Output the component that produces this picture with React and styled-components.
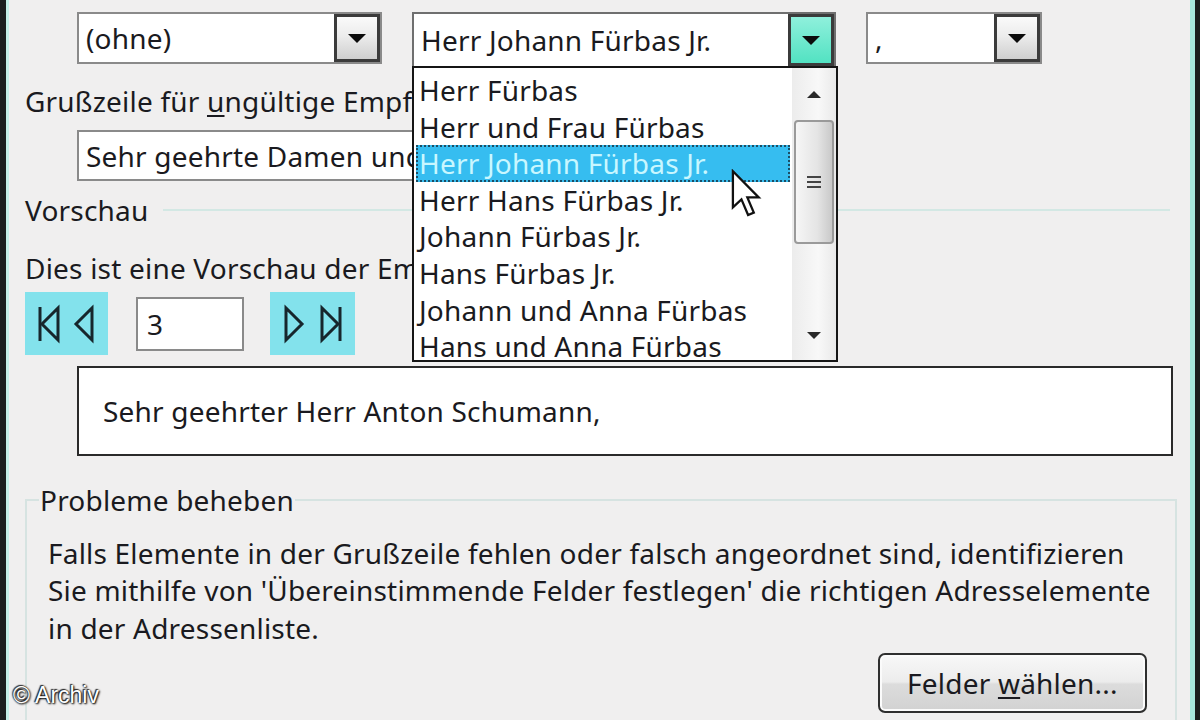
import React from 'react';
import styled, { createGlobalStyle } from 'styled-components';

const Global = createGlobalStyle`
  html, body { margin: 0; padding: 0; background: #efefef; }
  body { font-family: "Noto Sans", "DejaVu Sans", sans-serif; }
  * { box-sizing: border-box; }
`;

const Window = styled.div`
  position: relative;
  width: 1200px;
  height: 720px;
  overflow: hidden;
  background: #f0efef;
  border-left: 6px solid #1b1f1e;
  border-right: 5px solid #1b1f1e;
  box-shadow: inset 3px 0 0 #c4efe7, inset -5px 0 0 #a8e9dd;
  color: #1a1a20;
  font-size: 28px;
  letter-spacing: 0.2px;
  padding-left: 19px;
`;

const ComboRow = styled.div`
  display: flex;
  align-items: flex-start;
  gap: 30px;
  margin: 12px 0 0 52px;
`;

const Combo = styled.div`
  position: relative;
  display: flex;
  align-items: center;
  width: ${p => p.$w}px;
  height: ${p => p.$h || 52}px;
  background: #fff;
  border: 2px solid ${p => (p.$open ? '#6f6f6f' : '#8a8a8a')};
  padding-left: 7px;
`;

const ComboText = styled.span`
  flex: 1;
  white-space: nowrap;
  line-height: 1.3;
`;

const DropButton = styled.div`
  position: relative;
  width: 46px;
  align-self: stretch;
  border: 3px solid #3b3b3b;
  background: ${p =>
    p.$active
      ? 'linear-gradient(#8ff0dc, #52e2c2)'
      : 'linear-gradient(#fafafa 0%, #ececec 45%, #cfcfcf 100%)'};
  display: flex;
  align-items: center;
  justify-content: center;
  &::after {
    content: '';
    border-left: 9px solid transparent;
    border-right: 9px solid transparent;
    border-top: 9px solid #0c0c0c;
  }
`;

const DropList = styled.div`
  position: absolute;
  top: 100%;
  left: -2px;
  width: 426px;
  height: 296px;
  background: #fff;
  border: 2px solid #151515;
  display: flex;
  z-index: 5;
  overflow: hidden;
`;

const Items = styled.div`
  flex: 1;
  padding: 4px 0 0 2px;
`;

const Item = styled.div`
  height: 36.6px;
  line-height: 36.6px;
  padding-left: 3px;
  white-space: nowrap;
  color: ${p => (p.$sel ? '#c9f7ff' : '#1a1a20')};
  background: ${p => (p.$sel ? '#36bdf0' : 'transparent')};
  outline: ${p => (p.$sel ? '2px dotted #1c4d64' : 'none')};
  outline-offset: -2px;
  margin-right: ${p => (p.$sel ? '2px' : '0')};
`;

const ScrollBar = styled.div`
  width: 44px;
  background: linear-gradient(90deg, #ececec, #f8f8f8 60%, #e9e9e9);
  display: flex;
  flex-direction: column;
  align-items: center;
`;

const ScrollArrow = styled.div`
  height: ${p => p.$h}px;
  display: flex;
  align-items: center;
  justify-content: center;
  &::after {
    content: '';
    border-left: 7px solid transparent;
    border-right: 7px solid transparent;
    ${p => (p.$up ? 'border-bottom: 7px solid #2a2a2a;' : 'border-top: 7px solid #2a2a2a;')}
  }
`;

const Thumb = styled.div`
  width: 40px;
  height: 124px;
  border: 2px solid #9a9a9a;
  border-radius: 4px;
  background: linear-gradient(90deg, #f6f6f6, #e4e4e4 60%, #c9c9c9);
  display: flex;
  flex-direction: column;
  align-items: center;
  justify-content: center;
  gap: 3px;
  margin-bottom: auto;
`;

const Grip = styled.span`
  width: 14px;
  height: 2px;
  background: #444;
`;

const Label = styled.div`
  line-height: 36px;
  margin-top: ${p => p.$mt || 0}px;
  white-space: nowrap;
`;

const U = styled.span`
  text-decoration: underline;
  text-underline-offset: 3px;
  text-decoration-thickness: 2px;
`;

const TextField = styled.div`
  width: ${p => p.$w}px;
  height: ${p => p.$h}px;
  margin: ${p => p.$mt || 0}px 0 0 ${p => p.$ml || 0}px;
  background: #fff;
  border: 2px solid ${p => (p.$dark ? '#2a2a2a' : '#8a8a8a')};
  display: flex;
  align-items: center;
  padding-left: ${p => p.$pl || 7}px;
  white-space: nowrap;
  overflow: hidden;
`;

const SectionTitle = styled.div`
  display: flex;
  align-items: center;
  margin-top: 11px;
  line-height: 36px;
  width: 1145px;
  &::after {
    content: '';
    flex: 1;
    height: 2px;
    background: #d3e8e4;
    margin-left: 14px;
  }
`;

const NavRow = styled.div`
  display: flex;
  align-items: center;
  height: 63px;
  margin-top: 6px;
`;

const NavGroup = styled.div`
  display: flex;
  align-items: center;
  justify-content: space-around;
  width: ${p => p.$w}px;
  height: 63px;
  background: #83e2ec;
  margin-left: ${p => p.$ml || 0}px;
  padding: 0 6px;
`;

const Preview = styled(TextField)``;

const Group = styled.fieldset`
  width: 1145px;
  margin: 26px 0 0 0;
  padding: 0 24px 0 12px;
  border: 2px solid #d6e3e1;
  border-bottom: none;
  min-height: 260px;
`;

const Legend = styled.legend`
  padding: 0 1px;
  line-height: 36px;
`;

const Para = styled.p`
  margin: 17px 0 0 9px;
  line-height: 37.3px;
  white-space: nowrap;
`;

const ButtonRow = styled.div`
  display: flex;
  justify-content: flex-end;
  margin: 6px 4px 0 0;
`;

const Button = styled.button`
  width: 269px;
  height: 60px;
  font: inherit;
  letter-spacing: inherit;
  color: #1a1a20;
  border: 2px solid #2f2f2f;
  border-radius: 7px;
  background: linear-gradient(#f8f8f8 0%, #ececec 48%, #dcdcdc 52%, #d2d2d2 100%);
  box-shadow: inset 0 0 0 2px #fbfbfb;
  padding: 0;
`;

const Watermark = styled.div`
  position: absolute;
  left: 7px;
  bottom: 11px;
  font-family: "Liberation Sans", Arial, sans-serif;
  font-size: 23px;
  letter-spacing: 0;
  color: #fff;
  text-shadow: 0 0 2px #000, 1px 1px 2px #000, -1px -1px 1px #333;
`;

const Cursor = styled.svg`
  position: absolute;
  left: 317px;
  top: 155px;
  z-index: 6;
`;

const NavIcon = ({ kind }) => {
  const s = { stroke: '#17262c', strokeWidth: 3, fill: 'none', strokeLinejoin: 'miter' };
  return (
    <svg width="26" height="40" viewBox="0 0 26 40">
      {kind === 'first' && (
        <>
          <line x1="4" y1="3" x2="4" y2="37" {...s} />
          <polygon points="22,4 6,20 22,36" {...s} />
        </>
      )}
      {kind === 'prev' && <polygon points="21,4 5,20 21,36" {...s} />}
      {kind === 'next' && <polygon points="5,4 21,20 5,36" {...s} />}
      {kind === 'last' && (
        <>
          <polygon points="4,4 20,20 4,36" {...s} />
          <line x1="22" y1="3" x2="22" y2="37" {...s} />
        </>
      )}
    </svg>
  );
};

const options = [
  'Herr Fürbas',
  'Herr und Frau Fürbas',
  'Herr Johann Fürbas Jr.',
  'Herr Hans Fürbas Jr.',
  'Johann Fürbas Jr.',
  'Hans Fürbas Jr.',
  'Johann und Anna Fürbas',
  'Hans und Anna Fürbas',
];

export default function App() {
  return (
    <>
      <Global />
      <Window>
        <ComboRow>
          <Combo $w={305}>
            <ComboText>(ohne)</ComboText>
            <DropButton />
          </Combo>
          <Combo $w={424} $h={56} $open>
            <ComboText>Herr Johann Fürbas Jr.</ComboText>
            <DropButton $active />
            <DropList>
              <Items>
                {options.map((o, i) => (
                  <Item key={o} $sel={i === 2}>{o}</Item>
                ))}
              </Items>
              <ScrollBar>
                <ScrollArrow $up $h={52} />
                <Thumb>
                  <Grip />
                  <Grip />
                  <Grip />
                </Thumb>
                <ScrollArrow $h={50} />
              </ScrollBar>
            </DropList>
            <Cursor width="38" height="52" viewBox="0 0 20 27">
              <path
                d="M1 1 L1 20 L5.5 15.8 L9 24 L12 22.8 L8.6 14.8 L14.6 14.8 Z"
                fill="#fff"
                stroke="#111"
                strokeWidth="1.2"
                strokeLinejoin="miter"
              />
            </Cursor>
          </Combo>
          <Combo $w={176}>
            <ComboText>,</ComboText>
            <DropButton />
          </Combo>
        </ComboRow>

        <Label $mt={15}>
          Grußzeile für <U>u</U>ngültige Empfänger:
        </Label>
        <TextField $w={759} $h={51} $mt={11} $ml={52}>
          Sehr geehrte Damen und Herren,
        </TextField>

        <SectionTitle>Vorschau</SectionTitle>
        <Label $mt={22}>Dies ist eine Vorschau der Empfängerliste:</Label>

        <NavRow>
          <NavGroup $w={83}>
            <NavIcon kind="first" />
            <NavIcon kind="prev" />
          </NavGroup>
          <TextField $w={108} $h={54} $ml={28} $pl={9}>3</TextField>
          <NavGroup $w={85} $ml={26}>
            <NavIcon kind="next" />
            <NavIcon kind="last" />
          </NavGroup>
        </NavRow>

        <Preview $w={1096} $h={90} $mt={11} $ml={52} $pl={24} $dark>
          Sehr geehrter Herr Anton Schumann,
        </Preview>

        <Group>
          <Legend>Probleme beheben</Legend>
          <Para>
            Falls Elemente in der Grußzeile fehlen oder falsch angeordnet sind, identifizieren
            <br />
            Sie mithilfe von 'Übereinstimmende Felder festlegen' die richtigen Adresselemente
            <br />
            in der Adressenliste.
          </Para>
          <ButtonRow>
            <Button>
              Felder <U>w</U>ählen...
            </Button>
          </ButtonRow>
        </Group>

        <Watermark>© Archiv</Watermark>
      </Window>
    </>
  );
}
